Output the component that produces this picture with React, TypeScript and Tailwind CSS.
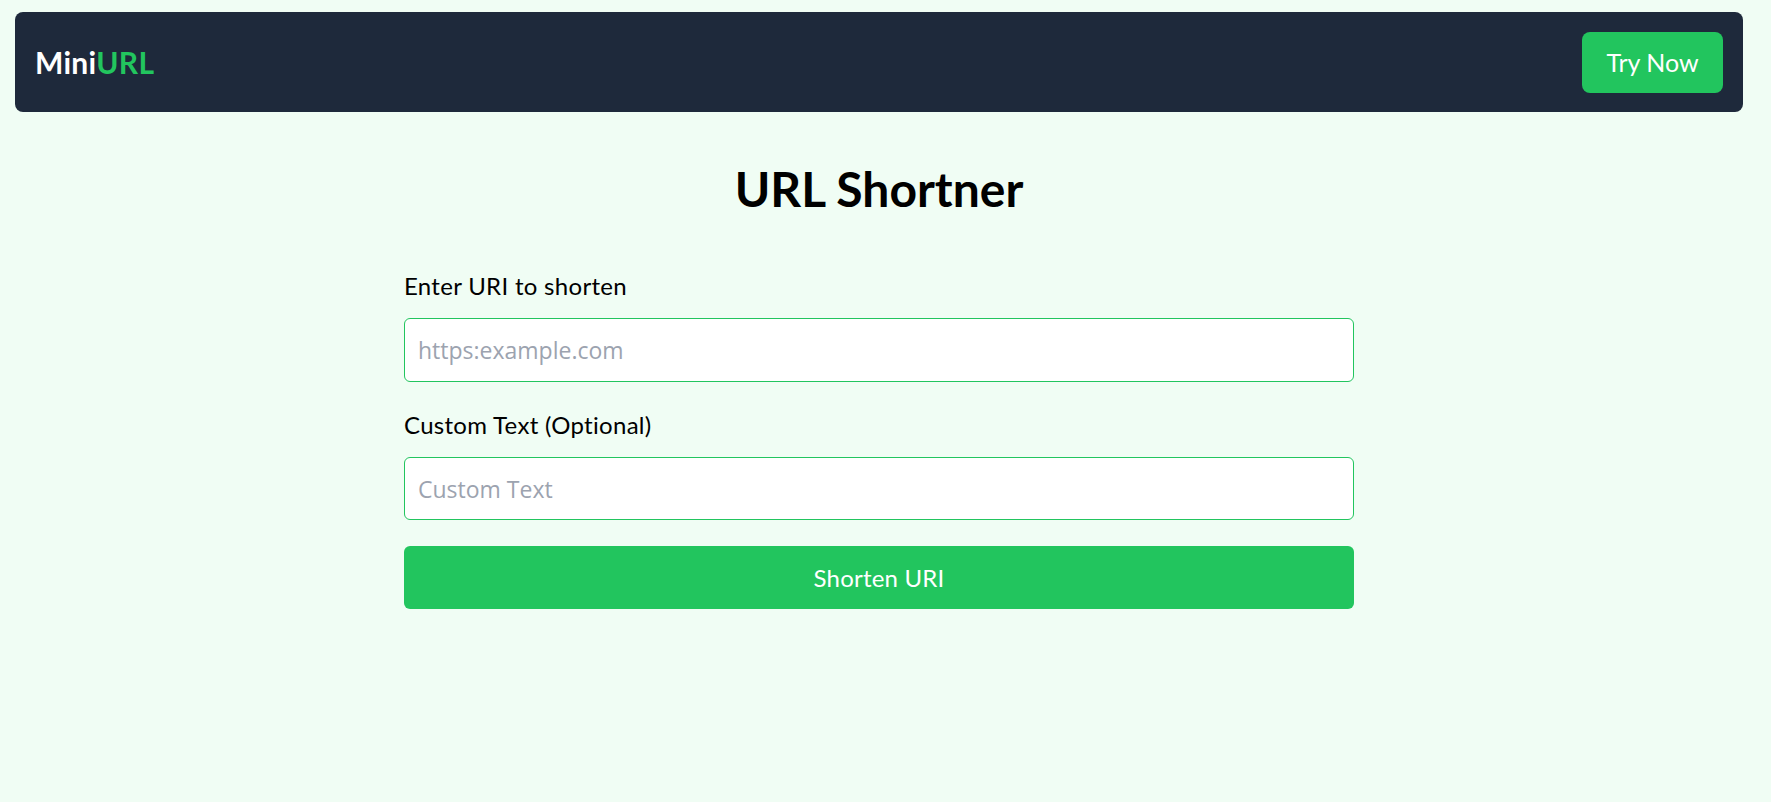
import React from "react";

export default function App() {
  return (
    <div className="min-h-[802px] w-full bg-[#f0fdf4] font-['Lato',sans-serif]">
      <div className="w-[1758px] pt-[12px]">
        <nav className="mx-[15px] flex h-[100px] items-center justify-between rounded-lg bg-[#1e293b] px-5">
          <div className="text-[30px] font-bold leading-none tracking-[0.3px]">
            <span className="text-white">Mini</span>
            <span className="text-[#22c55e]">URL</span>
          </div>
          <button className="h-[61px] w-[141px] rounded-lg bg-[#22c55e] text-[25px] leading-none text-white">
            Try Now
          </button>
        </nav>

        <h1 className="mt-[53px] text-center text-[48px] font-bold leading-[48px] text-black">
          URL Shortner
        </h1>

        <form className="mx-auto mt-[61px] flex w-[950px] flex-col">
          <label className="text-[24px] leading-[24px] tracking-[0.3px] text-black">Enter URI to shorten</label>
          <input
            type="text"
            placeholder="https:example.com"
            className="mt-[20px] h-[64px] w-full rounded-md border border-[#22c55e] bg-white pl-[13px] font-['Open_Sans',sans-serif] text-[23px] outline-none placeholder:text-[#9ca3af]"
          />
          <label className="mt-[31px] text-[24px] leading-[24px] tracking-[0.3px] text-black">Custom Text (Optional)</label>
          <input
            type="text"
            placeholder="Custom Text"
            className="mt-[20px] h-[63px] w-full rounded-md border border-[#22c55e] bg-white pl-[13px] font-['Open_Sans',sans-serif] text-[23px] outline-none placeholder:text-[#9ca3af]"
          />
          <button
            type="button"
            className="mt-[26px] h-[63px] w-full rounded-md bg-[#22c55e] text-[24px] leading-none tracking-[0.2px] text-white"
          >
            Shorten URI
          </button>
        </form>
      </div>
    </div>
  );
}
